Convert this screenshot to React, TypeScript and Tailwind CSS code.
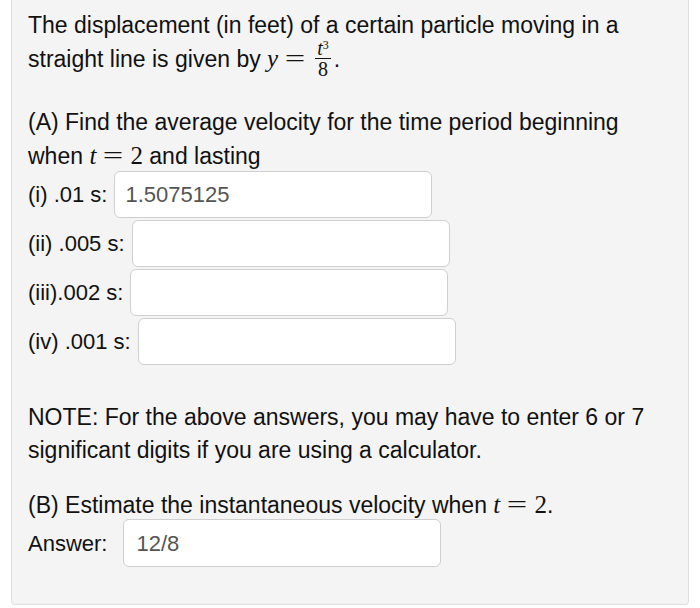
import React from "react";

function Math({ children }: { children: React.ReactNode }) {
  return (
    <span className="font-['Liberation_Serif',serif] text-[25px]">{children}</span>
  );
}

function Eq() {
  return <span className="inline-block mx-[10px] scale-x-[1.45]">=</span>;
}

function Row({ label, value }: { label: string; value?: string }) {
  return (
    <div className="flex items-center h-[49px]">
      <span className="text-[22px]">{label}</span>
      <div className="ml-[7px] w-[318px] h-[47px] bg-white border border-[#cfcfcf] rounded-[6px] flex items-center px-[10px] text-[22px] text-[#555]">
        {value}
      </div>
    </div>
  );
}

export default function App() {
  return (
    <div className="w-[700px] h-[608px] bg-white font-['Liberation_Sans',Arial,sans-serif] text-[#111]">
      <div className="mx-[11px] h-[605px] bg-[#f4f4f4] border border-t-0 border-[#dedede] rounded-b-[4px] px-[16px] pt-[8px]">
        <p className="text-[23px] leading-[34px]">
          The displacement (in feet) of a certain particle moving in a
          <br />
          straight line is given by{" "}
          <Math>
            <i>y</i>
            <Eq />
          </Math>
          <span className="inline-flex flex-col items-center align-middle mx-[3px] font-['Liberation_Serif',serif] text-[20px] leading-[17px] relative -top-[2px]">
            <span className="italic border-b border-[#111] px-[2px] pb-[1px]">
              t<sup className="text-[12px] not-italic">3</sup>
            </span>
            <span className="pt-[2px]">8</span>
          </span>
          .
        </p>

        <p className="mt-[26px] text-[23px] leading-[33px]">
          (A) Find the average velocity for the time period beginning
          <br />
          when{" "}
          <Math>
            <i>t</i>
            <Eq />2
          </Math>{" "}
          and lasting
        </p>

        <div className="-mt-[3px]">
          <Row label="(i) .01 s:" value="1.5075125" />
          <Row label="(ii) .005 s:" />
          <Row label="(iii).002 s:" />
          <Row label="(iv) .001 s:" />
        </div>

        <p className="mt-[35px] text-[23px] leading-[33px]">
          NOTE: For the above answers, you may have to enter 6 or 7
          <br />
          significant digits if you are using a calculator.
        </p>

        <p className="mt-[21px] text-[23px] leading-[33px]">
          (B) Estimate the instantaneous velocity when{" "}
          <Math>
            <i>t</i>
            <Eq />2
          </Math>
          .
        </p>

        <div className="-mt-[3px] flex items-center h-[48px]">
          <span className="text-[22px]">Answer:</span>
          <div className="ml-[16px] w-[318px] h-[48px] bg-white border border-[#cfcfcf] rounded-[6px] flex items-center px-[12px] text-[22px] text-[#555]">
            12/8
          </div>
        </div>
      </div>
    </div>
  );
}
